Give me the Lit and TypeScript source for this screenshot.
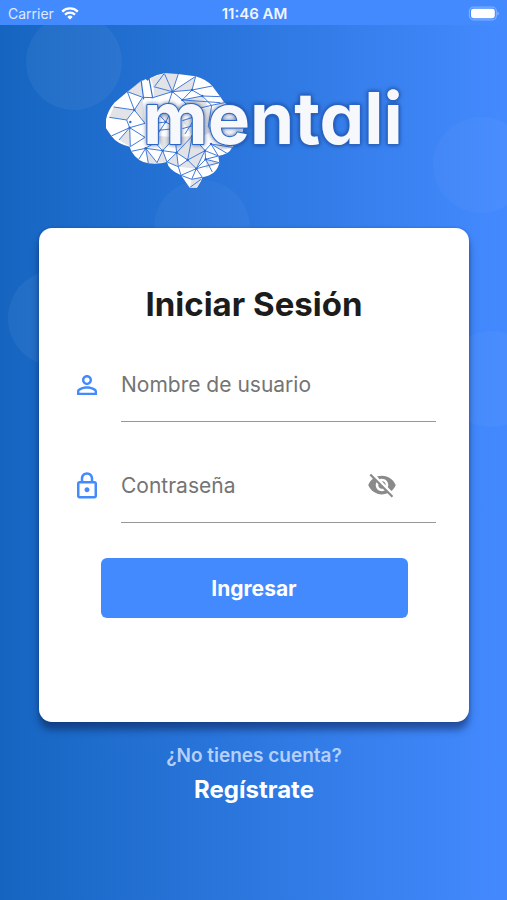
import { LitElement, html, css, svg } from "lit";
import { customElement, state } from "lit/decorators.js";

// Facets of the brain, on a grid three times finer than the drawn logo.
const OUTLINE =
  "M33 205 L33 178 Q38 152 58 128 L97 95 L138 62 L146 61 L152 57 L158 62 L166 54 Q185 44 208 40 L250 42 L302 49 Q334 58 352 78 L376 110 L388 128 L430 150 L446 200 L440 236 L412 262 Q402 284 370 288 L373 308 Q366 344 322 352 L318 364 L306 383 L284 383 L258 346 Q220 330 216 306 Q190 314 160 310 Q128 306 109 274 L104 260 Q66 252 49 228 Z";

const SHADED = [
  "97,97 138,62 143,112",
  "166,54 208,40 232,95 176,80",
  "208,40 250,42 232,95",
  "176,80 232,95 176,113",
  "302,49 291,90 232,95",
  "56,141 113,150 95,180 43,172",
  "72,240 104,203 106,260",
  "118,150 143,112 150,190",
  "160,310 152,265 186,308",
  "203,272 216,306 186,308",
  "190,228 240,232 203,272",
  "240,232 292,228 278,300 245,278",
  "292,228 330,272 304,326 278,300",
  "216,306 245,278 250,320",
  "278,300 250,320 304,326",
  "332,298 373,308 334,326",
  "285,383 290,358 322,352 306,383",
  "348,252 412,262 378,270",
  "262,120 322,108 340,140 290,150",
  "180,150 230,130 212,186",
  "262,182 340,140 400,190 300,240",
];

const EDGES =
  "M97 95 L143 112 M97 95 L118 150 M138 62 L97 95 M143 112 L176 113 " +
  "M56 141 L118 150 M118 150 L143 112 M118 150 L95 180 M118 150 L150 190 " +
  "M43 172 L95 180 L104 203 L49 228 M104 203 L72 240 M104 203 L106 260 " +
  "M104 203 L150 232 M104 203 L150 190 M150 232 L106 260 M152 265 L130 300 M152 265 L109 274 M152 265 L160 310 " +
  "M152 265 L186 308 L203 272 L152 265 M203 272 L216 306 M203 272 L180 248 L152 265 M203 272 L240 232 M203 272 L245 278 L216 306 " +
  "M176 80 L232 95 M208 40 L232 95 M250 42 L232 95 M302 49 L232 95 M170 114 L232 95 M232 95 L262 120 M232 95 L220 132 " +
  "M208 40 L180 78 M302 49 L291 90 M232 95 L291 90 M291 90 L352 78 M291 90 L322 108 L376 110 " +
  "M262 120 L291 90 M262 120 L322 108 M262 120 L376 128 M322 108 L350 136 L388 128 M262 120 L290 150 L350 136 " +
  "M180 150 L212 186 L230 150 M212 186 L180 190 M212 186 L184 228 M212 186 L238 200 M180 212 L238 206 " +
  "M262 182 L300 170 M262 206 L298 196 M270 222 L300 174 M290 150 L300 190 M350 136 L340 200 L372 240 " +
  "M240 232 L245 278 M292 228 L245 278 M292 228 L278 300 L245 278 L250 320 M278 300 L250 320 L216 306 M292 228 L330 272 L348 252 " +
  "M330 272 L278 300 M330 272 L304 326 M278 300 L304 326 M330 272 L332 298 L304 326 M330 272 L370 288 M348 252 L370 288 " +
  "M348 252 L412 262 M348 252 L396 280 M332 298 L373 308 M332 298 L370 288 M304 326 L373 308 M332 298 L352 336 " +
  "M304 326 L322 352 M304 326 L258 346 M304 326 L290 358 L258 346 M250 320 L258 346 M290 358 L322 352 M284 383 L318 358";

const NODES = [
  [118, 150], [104, 203], [106, 186], [232, 95], [291, 90], [322, 108], [262, 120],
  [212, 186], [203, 272], [152, 265], [245, 278], [292, 228], [278, 300], [330, 272],
  [304, 326], [332, 298], [348, 252],
];

@customElement("mentali-logo")
export class MentaliLogo extends LitElement {
  static styles = css`
    :host { display: block; width: 300px; height: 120px; }
    .logo { display: block; width: 100%; height: 100%; overflow: visible; }
    .brain { filter: drop-shadow(0 0 2px rgba(20, 60, 140, 0.7)); }
    .word {
      font: 700 71px Inter, "Open Sans", sans-serif;
      font-feature-settings: "cv11" 1;
      fill: #f7f8fb;
      stroke: #2a66c6;
      stroke-width: 2px;
      stroke-linejoin: round;
      paint-order: stroke;
      filter: drop-shadow(0 0 2px rgba(16, 50, 120, 0.75));
    }
  `;

  render() {
    return html`
      <svg class="logo" viewBox="0 0 300 120" role="img" aria-label="mentali">
        <g class="brain" transform="translate(-9 -12) scale(.3333)">
          <clipPath id="shape"><path d=${OUTLINE} /></clipPath>
          <path d=${OUTLINE} fill="#fff" />
          <g clip-path="url(#shape)">
            ${SHADED.map((p) => svg`<polygon points=${p} fill="#e2e3e6" />`)}
            <path d="M138 58 L146 118 M162 54 L173 114" stroke="#2f6fd6" stroke-width="3.6" />
            <path d=${EDGES} fill="none" stroke="#4079dc" stroke-width="3" />
            ${NODES.map(([x, y]) => svg`<circle cx=${x} cy=${y} r="3.6" fill="#3069d2" />`)}
          </g>
        </g>
        <text class="word" x="39" y="72">mentali</text>
      </svg>
    `;
  }
}

@customElement("app-root")
export class AppRoot extends LitElement {
  static styles = css`
    :host {
      display: block;
      font-family: Inter, "Liberation Sans", sans-serif;
      color: #fff;
    }
    *, *::before, *::after { box-sizing: border-box; }
    .page {
      position: relative;
      display: flex;
      flex-direction: column;
      min-height: 100vh;
      overflow: hidden;
      background: linear-gradient(90deg, #1565c0, #448aff);
    }
    .bubble {
      position: absolute;
      width: 96px;
      height: 96px;
      border-radius: 50%;
      background: rgba(255, 255, 255, 0.05);
    }
    .b1 { left: 26px; top: 14px; }
    .b2 { left: 154px; top: 180px; background: rgba(255, 255, 255, 0.035); }
    .b3 { left: 8px; top: 270px; }
    .b4 { right: -22px; top: 117px; background: rgba(255, 255, 255, 0.03); }
    .b5 { right: -32px; top: 331px; background: rgba(255, 255, 255, 0.03); }
    .status {
      position: relative;
      display: grid;
      grid-template-columns: 1fr auto 1fr;
      align-items: center;
      height: 25px;
      padding: 2px 6px 0 8px;
      background: #448aff;
      font-size: 14px;
      line-height: 20px;
    }
    .carrier { display: flex; align-items: center; gap: 7px; color: #dfe9ff; }
    .clock { font-size: 15px; font-weight: 600; color: #f0f5ff; }
    .battery { justify-self: end; display: block; }
    .wifi { display: block; }
    .main {
      position: relative;
      display: flex;
      flex-direction: column;
      align-items: center;
      padding: 47px 38px 40px 39px;
    }
    .card {
      align-self: stretch;
      margin-top: 36px;
      padding: 56px 33px 104px;
      border-radius: 13px;
      background: #fff;
      box-shadow: 0 8px 7px rgba(10, 30, 80, 0.5), 0 0 3px rgba(10, 30, 80, 0.3);
    }
    .title {
      margin: 0 0 23px;
      font-size: 33px;
      line-height: 40px;
      font-weight: 700;
      text-align: center;
      color: #1c1c1c;
    }
    .field {
      display: flex;
      align-items: center;
      gap: 19px;
      margin-bottom: 26px;
    }
    .icon { display: block; width: 30px; height: 30px; flex: none; fill: #448aff; }
    .line {
      flex: 1;
      min-width: 0;
      display: flex;
      align-items: center;
      height: 75px;
      border-bottom: 1px solid #989898;
    }
    .input {
      flex: 1;
      min-width: 0;
      height: 40px;
      padding: 0;
      border: 0;
      outline: 0;
      background: none;
      font: inherit;
      font-size: 21px;
      color: #1c1c1c;
    }
    .input::placeholder { color: #747474; opacity: 1; }
    .toggle {
      margin-right: 39px;
      padding: 0;
      border: 0;
      background: none;
      cursor: pointer;
    }
    .toggle .icon { fill: #8a8a8a; }
    .submit {
      display: block;
      width: calc(100% - 57px);
      height: 60px;
      margin: 35px auto 0;
      border: 0;
      border-radius: 6px;
      background: #448aff;
      color: #fff;
      font: inherit;
      font-size: 21px;
      font-weight: 700;
      cursor: pointer;
    }
    .field.last { margin-bottom: 0; }
    .ask {
      margin: 22px 0 6px;
      font-size: 19px;
      line-height: 24px;
      font-weight: 600;
      color: #b5d0fb;
    }
    .register {
      font-size: 24px;
      line-height: 32px;
      font-weight: 700;
      color: #fff;
      text-decoration: none;
    }
  `;

  @state() private reveal = false;

  render() {
    return html`
      <div class="page">
        <span class="bubble b1"></span>
        <span class="bubble b2"></span>
        <span class="bubble b3"></span>
        <span class="bubble b4"></span>
        <span class="bubble b5"></span>
        <header class="status">
          <span class="carrier">
            Carrier
            <svg class="wifi" width="18" height="13" viewBox="0 0 18 13" fill="none" stroke="#fff" stroke-width="2.3" aria-hidden="true">
              <path d="M1.2 4.6 A11.2 11.2 0 0 1 16.8 4.6" />
              <path d="M4 7.7 A7.2 7.2 0 0 1 14 7.7" />
              <path d="M9 12.6 L6.3 9.9 A3.9 3.9 0 0 1 11.7 9.9 Z" fill="#fff" stroke="none" />
            </svg>
          </span>
          <span class="clock">11:46 AM</span>
          <svg class="battery" width="33" height="15" viewBox="0 0 33 15" aria-hidden="true">
            <rect x="1.4" y="1.2" width="27" height="12.6" rx="4" fill="none" stroke="#7dacff" stroke-width="1.2" />
            <rect x="3" y="2.8" width="23.8" height="9.4" rx="2.4" fill="#fff" />
            <path d="M29.4 5.4 Q30.8 6.2 30.8 7.5 Q30.8 8.8 29.4 9.6 Z" fill="#8db7ff" />
          </svg>
        </header>
        <main class="main">
          <mentali-logo></mentali-logo>
          <form class="card" @submit=${(e: Event) => e.preventDefault()}>
            <h1 class="title">Iniciar Sesión</h1>
            <div class="field">
              <svg class="icon" viewBox="0 0 24 24" aria-hidden="true">
                <path d="M12 5.9c1.16 0 2.1.94 2.1 2.1s-.94 2.1-2.1 2.1S9.9 9.16 9.9 8s.94-2.1 2.1-2.1m0 9c2.97 0 6.1 1.46 6.1 2.1v1.1H5.9V17c0-.64 3.13-2.1 6.1-2.1M12 4C9.79 4 8 5.79 8 8s1.790 4 4 4 4-1.790 4-4-1.790-4-4-4zm0 9c-2.670 0-8 1.340-8 4v3h16v-3c0-2.660-5.330-4-8-4z" />
              </svg>
              <div class="line">
                <input class="input" type="text" aria-label="Nombre de usuario" placeholder="Nombre de usuario" />
              </div>
            </div>
            <div class="field last">
              <svg class="icon" viewBox="0 0 24 24" aria-hidden="true">
                <path d="M18 8h-1V6c0-2.760-2.240-5-5-5S7 3.240 7 6v2H6c-1.100 0-2 .9-2 2v10c0 1.100.9 2 2 2h12c1.100 0 2-.9 2-2V10c0-1.100-.9-2-2-2zM9 6c0-1.660 1.340-3 3-3s3 1.340 3 3v2H9V6zm9 14H6V10h12v10zm-6-3c1.100 0 2-.9 2-2s-.9-2-2-2-2 .9-2 2 .9 2 2 2z" />
              </svg>
              <div class="line">
                <input class="input" type=${this.reveal ? "text" : "password"} aria-label="Contraseña" placeholder="Contraseña" />
                <button class="toggle" type="button" aria-label="Mostrar contraseña" @click=${() => (this.reveal = !this.reveal)}>
                  <svg class="icon" viewBox="0 0 24 24" aria-hidden="true">
                    <path d="M12 7c2.760 0 5 2.240 5 5 0 .65-.13 1.260-.36 1.830l2.920 2.920c1.510-1.260 2.700-2.890 3.430-4.750-1.730-4.390-6-7.500-11-7.500-1.400 0-2.740.25-3.980.7l2.160 2.160C10.740 7.130 11.350 7 12 7zM2 4.270l2.280 2.280.46.46C3.080 8.300 1.780 10.020 1 12c1.730 4.390 6 7.500 11 7.500 1.550 0 3.030-.3 4.380-.84l.42.42L19.730 22 21 20.730 3.270 3 2 4.270zM7.530 9.800l1.550 1.550c-.05.21-.08.43-.08.65 0 1.660 1.340 3 3 3 .22 0 .44-.03.65-.08l1.550 1.550c-.67.33-1.410.53-2.200.53-2.760 0-5-2.240-5-5 0-.79.2-1.530.53-2.200zm4.310-.78l3.150 3.150.02-.16c0-1.660-1.340-3-3-3l-.17.01z" />
                  </svg>
                </button>
              </div>
            </div>
            <button class="submit" type="submit">Ingresar</button>
          </form>
          <p class="ask">¿No tienes cuenta?</p>
          <a class="register" href="#registro">Regístrate</a>
        </main>
      </div>
    `;
  }
}
